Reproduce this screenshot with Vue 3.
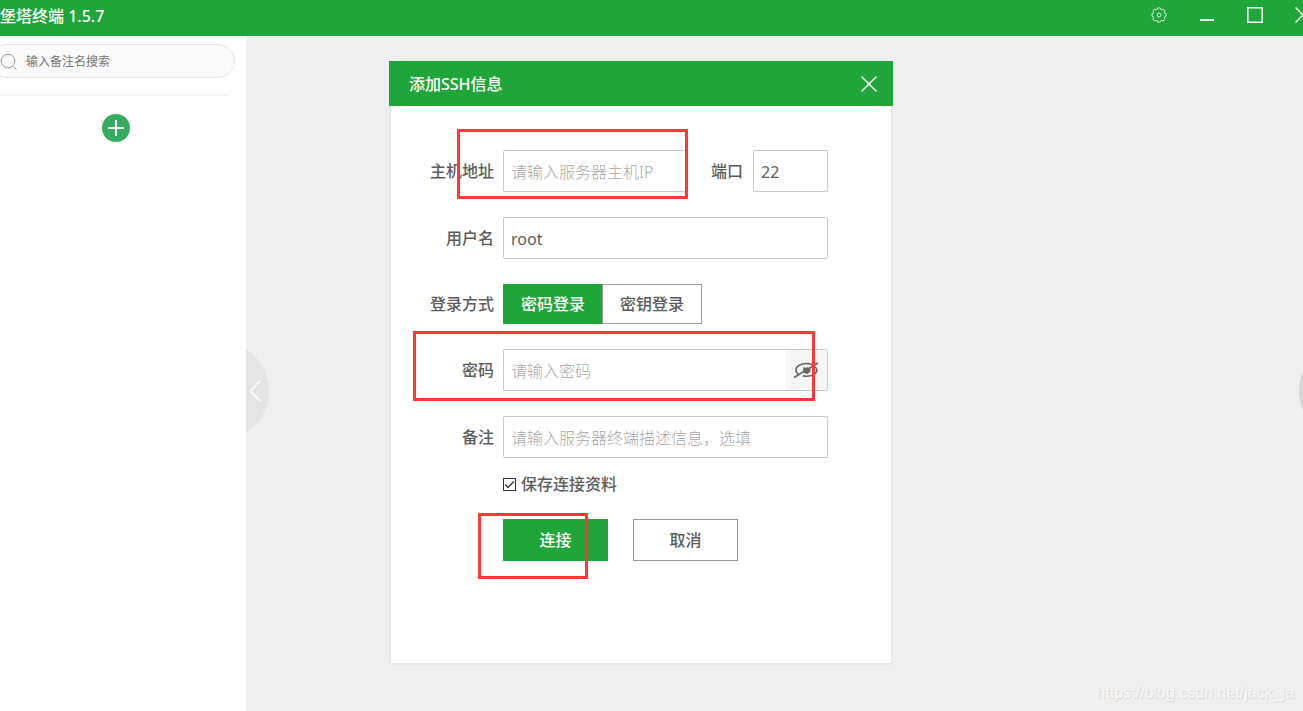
<script setup>
import { ref } from 'vue'

const keyword = ref('')
const host = ref('')
const port = ref('22')
const user = ref('root')
const mode = ref('password')
const password = ref('')
const showPassword = ref(false)
const remark = ref('')
const save = ref(true)
</script>

<template>
  <div class="app">
    <header class="titlebar">
      <h1 class="app-name">堡塔终端 1.5.7</h1>
      <div class="window-controls">
        <button type="button" aria-label="设置">
          <svg width="16" height="16" viewBox="0 0 16 16" fill="none" stroke="#fff" stroke-opacity=".85">
            <path d="M6.600 1h2.800l.5 1.500 1 .4 1.500-.7 1.600 1.700-.7 1.400.4 1 1.300.5v2.600l-1.300.5-.4 1 .7 1.400-1.600 1.700-1.500-.7-1 .4L9.400 15H6.600l-.5-1.300-1-.4-1.500.7L2 12.300l.7-1.400-.4-1L1 9.400V6.800l1.300-.5.4-1L2 3.900l1.600-1.700 1.500.7 1-.4z" />
            <rect x="6.300" y="6.300" width="3.400" height="3.400" rx="1" />
          </svg>
        </button>
        <button type="button" aria-label="最小化">
          <svg width="16" height="16" viewBox="0 0 16 16"><path d="M1 12h14v2H1z" fill="#fff" fill-opacity=".9" /></svg>
        </button>
        <button type="button" aria-label="最大化">
          <svg width="16" height="16" viewBox="0 0 16 16" fill="none" stroke="#fff" stroke-width="1.500"><path d="M.8.8h14.400v14.400H.8z" /></svg>
        </button>
        <button type="button" aria-label="关闭窗口">
          <svg width="16" height="16" viewBox="0 0 16 16" fill="none" stroke="#fff" stroke-width="1.500"><path d="M.5.5l15 15M15.500.5l-15 15" /></svg>
        </button>
      </div>
    </header>

    <div class="workspace">
      <aside class="sidebar">
        <div class="search">
          <svg width="18" height="18" viewBox="0 0 18 18" fill="none" stroke="#999">
            <circle cx="8" cy="8" r="6.800" /><path d="M13.500 13.500l3 3" />
          </svg>
          <input v-model="keyword" type="text" placeholder="输入备注名搜索" aria-label="输入备注名搜索" />
        </div>
        <div class="divider"></div>
        <button type="button" class="add" aria-label="添加">
          <svg width="28" height="28" viewBox="0 0 28 28">
            <circle cx="14" cy="14" r="14" fill="#36ac60" />
            <path d="M6 14h16M14 6v16" stroke="#fff" stroke-width="2" />
          </svg>
        </button>
      </aside>

      <main class="stage">
        <button type="button" class="handle handle-left" aria-label="收起侧栏">
          <svg width="12" height="22" viewBox="0 0 12 22" fill="none" stroke="#f8f8f8" stroke-width="2"><path d="M11 1L1.500 11 11 21" /></svg>
        </button>
        <button type="button" class="handle handle-right" aria-label="展开面板"></button>

        <form class="dialog" @submit.prevent>
          <div class="dialog-head">
            <h2>添加SSH信息</h2>
            <button type="button" class="close" aria-label="关闭">
              <svg width="16" height="16" viewBox="0 0 16 16" fill="none" stroke="#fff" stroke-width="1.500"><path d="M.5.5l15 15M15.500.5l-15 15" /></svg>
            </button>
          </div>

          <div class="dialog-body">
            <div class="row">
              <label class="name" for="host">主机地址</label>
              <div class="fields">
                <input id="host" v-model="host" class="box grow" type="text" placeholder="请输入服务器主机IP" />
                <label class="port-name" for="port">端口</label>
                <input id="port" v-model="port" class="box port" type="text" />
              </div>
              <span class="mark mark-host"></span>
            </div>

            <div class="row">
              <label class="name" for="user">用户名</label>
              <div class="fields"><input id="user" v-model="user" class="box grow" type="text" /></div>
            </div>

            <div class="row">
              <span id="mode-name" class="name">登录方式</span>
              <div class="modes" role="group" aria-labelledby="mode-name">
                <button type="button" :class="{ active: mode === 'password' }" @click="mode = 'password'">密码登录</button>
                <button type="button" :class="{ active: mode === 'key' }" @click="mode = 'key'">密钥登录</button>
              </div>
            </div>

            <div class="row">
              <label class="name" for="password">密码</label>
              <div class="secret">
                <input id="password" v-model="password" class="box grow" :type="showPassword ? 'text' : 'password'" placeholder="请输入密码" />
                <button type="button" aria-label="显示密码" @click="showPassword = !showPassword">
                  <svg width="26" height="18" viewBox="0 0 26 18" fill="none" stroke="#666" stroke-width="1.600">
                    <path d="M6.500 13.800C4.300 12.900 3 11 3 9c0-3.700 4.400-6.500 10.500-6.500 2.500 0 4.600.5 6.200 1.300M22 6c1.200 1 1.900 2 1.900 3.100 0 3.300-4.400 6.100-10.400 6.100-1.400 0-2.700-.2-3.800-.5M1 16.500L25 2" />
                    <path d="M10.300 7l1.200-1.200 1 1.500 2-1.200 2.700 1.700.2 3-3 2.200-3.600-1-.8-2.500z" fill="#666" stroke="none" />
                  </svg>
                </button>
              </div>
              <span class="mark mark-password"></span>
            </div>

            <div class="row">
              <label class="name" for="remark">备注</label>
              <div class="fields"><input id="remark" v-model="remark" class="box grow" type="text" placeholder="请输入服务器终端描述信息，选填" /></div>
            </div>

            <label class="save">
              <span class="tick">
                <input v-model="save" type="checkbox" />
                <svg v-if="save" width="13" height="13" viewBox="0 0 13 13" fill="none" stroke="#333" stroke-width="1.300"><path d="M2.200 6.500l2.800 3 5.800-6" /></svg>
              </span>
              保存连接资料
            </label>

            <div class="actions">
              <button type="submit" class="primary">连接</button>
              <button type="button">取消</button>
              <span class="mark mark-connect"></span>
            </div>
          </div>
        </form>

        <span class="watermark">https://blog.csdn.net/jack_ja</span>
      </main>
    </div>
  </div>
</template>

<style>
body {
  margin: 0;
  overflow: hidden;
}
</style>

<style scoped>
.app,
.app * {
  box-sizing: border-box;
}
.app {
  display: flex;
  flex-direction: column;
  min-height: 100vh;
  overflow: hidden;
  background: #efefef;
  color: #5c5c5c;
  font: 500 16px/22px "Noto Sans", "Noto Sans CJK SC", sans-serif;
}
button,
input {
  margin: 0;
  padding: 0;
  border: 0;
  background: none;
  color: inherit;
  font: inherit;
  outline: none;
}
button {
  cursor: pointer;
}
svg {
  display: block;
}
.titlebar {
  display: flex;
  justify-content: space-between;
  height: 36px;
  background: #20a53a;
  color: #fff;
}
.app-name {
  margin: 0;
  font-size: 16px;
  font-weight: 500;
  line-height: 32px;
}
.window-controls {
  display: flex;
  align-items: center;
  gap: 32px;
  height: 30px;
  margin-right: -8px;
}
.workspace {
  display: flex;
  flex: 1;
}
.sidebar {
  display: flex;
  flex-direction: column;
  width: 246px;
  padding-top: 8px;
  background: #fff;
}
.search {
  display: flex;
  align-items: center;
  gap: 8px;
  height: 34px;
  margin: 0 11px 0 -10px;
  padding: 2px 0 0 9px;
  border: 1px solid #e6e6e6;
  border-radius: 17px;
  background: #fafafa;
}
.search input {
  flex: 1;
  min-width: 0;
  font-size: 12px;
  font-weight: 400;
}
.search input::placeholder {
  color: #757575;
}
.divider {
  height: 2px;
  margin: 16px 16px 18px 0;
  background: #f5f5f5;
}
.add {
  align-self: center;
  margin-right: 14px;
}
.stage {
  position: relative;
  flex: 1;
  min-width: 0;
  padding: 25px 0 47px 143px;
}
.handle {
  position: absolute;
  top: 313px;
  width: 23px;
  height: 84px;
  overflow: hidden;
}
.handle::before {
  content: "";
  position: absolute;
  top: -8px;
  width: 100px;
  height: 100px;
  border-radius: 50%;
}
.handle-left {
  left: 0;
}
.handle-left::before {
  right: 0;
  background: #e4e4e4;
}
.handle-left svg {
  position: relative;
  margin-left: 3px;
}
.handle-right {
  right: 0;
  width: 4px;
}
.handle-right::before {
  left: 0;
  background: #d6d6d6;
}
.dialog {
  width: 504px;
}
.dialog-head {
  display: flex;
  align-items: center;
  justify-content: space-between;
  height: 45px;
  padding: 0 16px 0 20px;
  background: #20a53a;
  color: #fff;
}
.dialog-head h2 {
  margin: 0;
  font-size: 16px;
  font-weight: 500;
}
.dialog-body {
  display: flex;
  flex-direction: column;
  gap: 25px;
  padding: 44px 63px 102px 22px;
  border: solid #e8e8e8;
  border-width: 0 2px 2px;
  background: #fff;
}
.row {
  position: relative;
  display: grid;
  grid-template-columns: 81px 1fr;
  column-gap: 9px;
  align-items: center;
}
.name {
  text-align: right;
}
.fields {
  display: flex;
  align-items: center;
  min-width: 0;
}
.box {
  height: 42px;
  padding: 2px 7px 0;
  border: 1px solid #c8c8c8;
  border-radius: 2px;
  font-weight: 400;
}
.box::placeholder {
  color: #a8a8a8;
  font-weight: 300;
}
.grow {
  flex: 1;
  min-width: 0;
}
.port-name {
  margin: 0 10px 0 24px;
}
.port {
  width: 75px;
}
.modes {
  display: flex;
}
.modes button {
  width: 100px;
  height: 40px;
  border: 1px solid #999;
}
.modes button + button {
  margin-left: -1px;
}
.modes .active {
  border-color: #20a53a;
  background: #20a53a;
  color: #fff;
}
.secret {
  display: flex;
}
.secret .box {
  border-right: 0;
  border-radius: 2px 0 0 2px;
}
.secret button {
  width: 42px;
  padding-left: 7px;
  border: 1px solid #c8c8c8;
  border-left: 0;
  border-radius: 0 2px 2px 0;
  background: #f5f5f5;
}
.save {
  display: flex;
  align-items: center;
  gap: 5px;
  margin: -10px 0 -1px 90px;
}
.tick {
  position: relative;
  width: 13px;
  height: 13px;
}
.tick input {
  display: block;
  width: 13px;
  height: 13px;
  border: 1px solid #333;
  appearance: none;
}
.tick svg {
  position: absolute;
  inset: 0;
  pointer-events: none;
}
.actions {
  position: relative;
  display: flex;
  gap: 25px;
  margin-left: 90px;
}
.actions button {
  width: 105px;
  height: 42px;
  border: 1px solid #999;
}
.actions .primary {
  border-color: #20a53a;
  background: #20a53a;
  color: #fff;
}
.mark {
  position: absolute;
  border: 3px solid #ff3836;
  pointer-events: none;
}
.mark-host {
  top: -21px;
  left: 44px;
  width: 231px;
  height: 70px;
}
.mark-password {
  top: -18px;
  left: 0;
  width: 402px;
  height: 70px;
}
.mark-connect {
  top: -6px;
  left: -25px;
  width: 110px;
  height: 66px;
}
.watermark {
  position: absolute;
  right: 9px;
  bottom: 8px;
  color: #f8f8f8;
  font: 16px/22px "Liberation Sans", sans-serif;
  text-shadow: 1px 1px 1px #d4d4d4;
}
</style>
